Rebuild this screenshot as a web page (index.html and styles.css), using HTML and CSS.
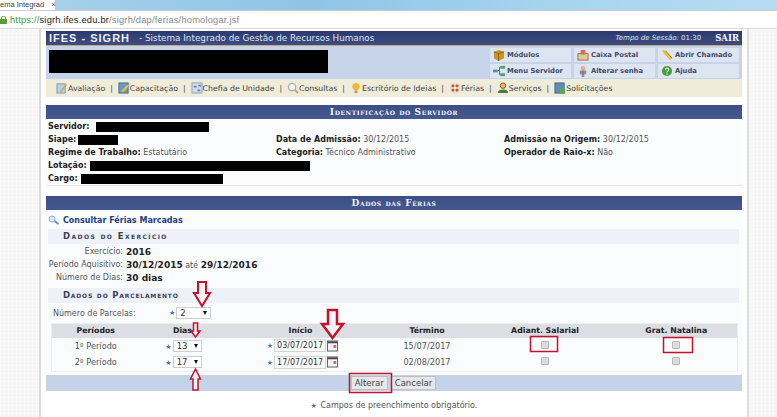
FILE: index.html
```html
<!DOCTYPE html>
<html lang="pt-BR">
<head>
    <meta charset="UTF-8">
    <title>SIGRH - Homologar Férias</title>
    <link rel="stylesheet" href="styles.css">
</head>
<body>
    <div class="tabstrip">
        <div class="tab"><span class="tab-title">ema Integrad</span><span class="tab-close">×</span></div>
    </div>
    <div class="urlbar">
        <svg class="lock" width="7" height="8" viewBox="0 0 7 8"><rect x="0" y="3" width="7" height="5" fill="#5a9a3a"/><path d="M1.5 3V2a2 2 0 0 1 4 0v1" fill="none" stroke="#5a9a3a"/></svg>
        <span class="url-https">https://</span><span class="url-host">sigrh.ifes.edu.br</span><span class="url-path">/sigrh/dap/ferias/homologar.jsf</span>
    </div>

    <div class="page">
        <div class="side side-left"></div>
        <div class="main">
            <div class="topbar">
                <span class="brand">IFES - SIGRH</span>
                <span class="brand-sub">- Sistema Integrado de Gestão de Recursos Humanos</span>
                <span class="session"><i>Tempo de Sessão:</i> 01:30</span>
                <span class="logout">SAIR</span>
            </div>

            <div class="userband">
                <div class="redact redact-user"></div>
                <div class="shortcuts">
                    <div class="shortcut">
                        <svg width="12" height="12" viewBox="0 0 13 13"><path d="M1 3l6-2 5 2v7l-6 3-5-3z" fill="#c9952a"/><path d="M1 3l5 2 6-2M6 5v8" fill="none" stroke="#8a6414"/></svg>Módulos
                    </div>
                    <div class="shortcut">
                        <svg width="12" height="12" viewBox="0 0 13 13"><rect x="1" y="5" width="11" height="7" fill="#e0c9a0" stroke="#a0703a"/><rect x="4" y="1" width="5" height="5" fill="#d86a5a"/></svg>Caixa Postal
                    </div>
                    <div class="shortcut">
                        <svg width="12" height="12" viewBox="0 0 13 13"><path d="M1 1l4 1 7 8-2 2-7-7z" fill="#e8c028"/><path d="M5 2l7 8" stroke="#a08010" fill="none"/></svg>Abrir Chamado
                    </div>
                    <div class="shortcut">
                        <svg width="12" height="12" viewBox="0 0 13 13"><rect x="0" y="5" width="5" height="3" fill="#4a90c0"/><rect x="8" y="1" width="5" height="3" fill="#4aa060"/><rect x="8" y="9" width="5" height="3" fill="#4aa060"/><path d="M5 6h2V2.5h1M7 6v4.500h1" fill="none" stroke="#557"/></svg>Menu Servidor
                    </div>
                    <div class="shortcut">
                        <svg width="12" height="12" viewBox="0 0 13 13"><circle cx="6.5" cy="3.5" r="2.5" fill="#e0b080"/><path d="M3 6h7v4H8v3H5v-3H3z" fill="#8a90a8"/><path d="M6.5 6v4" stroke="#c04040"/></svg>Alterar senha
                    </div>
                    <div class="shortcut">
                        <svg width="12" height="12" viewBox="0 0 13 13"><circle cx="6.5" cy="6.5" r="5.5" fill="#4a9a3a"/><path d="M4.8 5a1.8 1.8 0 1 1 2.500 1.700c-.6.3-.8.6-.8 1.300M6.500 9.200v1" fill="none" stroke="#fff" stroke-width="1.2"/></svg>Ajuda
                    </div>
                </div>
            </div>

            <div class="menubar">
                <span class="menu-item"><svg width="12" height="12" viewBox="0 0 13 13"><rect x="1" y="2" width="9" height="10" fill="#b8d0e8" stroke="#7a98b8"/><path d="M4 10l7-8 1 1-6 8z" fill="#d8a840"/></svg>Avaliação</span><span class="sep">|</span>
                <span class="menu-item"><svg width="12" height="12" viewBox="0 0 13 13"><rect x="1" y="1" width="10" height="11" fill="#6a98c0" stroke="#4a6a90"/><path d="M3 10l7-7 2 1-6 7z" fill="#e0c040"/></svg>Capacitação</span><span class="sep">|</span>
                <span class="menu-item"><svg width="12" height="12" viewBox="0 0 13 13"><rect x="1" y="1" width="11" height="11" fill="#d0dcec" stroke="#8aa0c0"/><path d="M3 4h3v2H3zM8 3h3v2H8zM7 8h3v2H7z" fill="#5a88b8"/></svg>Chefia de Unidade</span><span class="sep">|</span>
                <span class="menu-item"><svg width="12" height="12" viewBox="0 0 13 13"><circle cx="5.5" cy="5.5" r="4" fill="#f4f4f0" stroke="#b0b0b8" stroke-width="1.5"/><path d="M8.5 8.5l3.500 3.500" stroke="#d8a040" stroke-width="2"/></svg>Consultas</span><span class="sep">|</span>
                <span class="menu-item"><svg width="12" height="12" viewBox="0 0 13 13"><circle cx="6.5" cy="5" r="4" fill="#f0b838"/><rect x="5" y="9" width="3" height="3" fill="#a89878"/></svg>Escritório de Ideias</span><span class="sep">|</span>
                <span class="menu-item"><svg width="12" height="12" viewBox="0 0 13 13"><circle cx="6.5" cy="6.5" r="4.5" fill="none" stroke="#e8e0d0" stroke-width="3"/><path d="M3.3 3.3l2 2M9.7 3.3l-2 2M3.3 9.7l2-2M9.7 9.700l-2-2" stroke="#d05030" stroke-width="3"/></svg>Férias</span><span class="sep">|</span>
                <span class="menu-item"><svg width="12" height="12" viewBox="0 0 13 13"><circle cx="6.5" cy="4" r="3" fill="#e8b060" stroke="#8a6020"/><path d="M1 12c0-3 2-4 5.500-4s5.500 1 5.500 4z" fill="#4a7a40"/></svg>Serviços</span><span class="sep">|</span>
                <span class="menu-item"><svg width="12" height="12" viewBox="0 0 13 13"><rect x="1" y="1" width="10" height="11" fill="#5a90b8" stroke="#3a6a90"/><rect x="6" y="7" width="6" height="6" fill="#60a860"/></svg>Solicitações</span>
            </div>

            <div class="section">
                <h3 class="section-title">Identificação do Servidor</h3>
                <div class="ident">
                    <div class="ident-row"><b>Servidor:</b><span class="redact redact-name"></span></div>
                    <div class="ident-row">
                        <span class="col-a"><b>Siape:</b><span class="redact redact-siape"></span></span>
                        <span class="col-b"><b>Data de Admissão:</b> 30/12/2015</span>
                        <span><b>Admissão na Origem:</b> 30/12/2015</span>
                    </div>
                    <div class="ident-row">
                        <span class="col-a"><b>Regime de Trabalho:</b> Estatutário</span>
                        <span class="col-b"><b>Categoria:</b> Técnico Administrativo</span>
                        <span><b>Operador de Raio-x:</b> Não</span>
                    </div>
                    <div class="ident-row"><b>Lotação:</b><span class="redact redact-lotacao"></span></div>
                    <div class="ident-row"><b>Cargo:</b><span class="redact redact-cargo"></span></div>
                </div>
            </div>

            <div class="section section-ferias">
                <h3 class="section-title">Dados das Férias</h3>
                <div class="ferias">
                    <a class="consult" href="#"><svg width="13" height="11" viewBox="0 0 13 11"><circle cx="4" cy="4" r="3" fill="#dce8f4" stroke="#90b0d0"/><path d="M6.5 6l4 3" stroke="#7090b0" stroke-width="2"/></svg>Consultar Férias Marcadas</a>

                    <h4 class="subhead subhead-exerc">Dados do Exercício</h4>
                    <div class="info-row"><span class="info-label">Exercício:</span><b>2016</b></div>
                    <div class="info-row"><span class="info-label">Período Aquisitivo:</span><span><b>30/12/2015</b> até <b>29/12/2016</b></span></div>
                    <div class="info-row"><span class="info-label">Número de Dias:</span><b>30 dias</b></div>

                    <h4 class="subhead subhead-parc">Dados do Parcelamento</h4>
                    <div class="parcelas">
                        <span class="parcelas-label">Número de Parcelas:</span>
                        <span class="req">★</span>
                        <span class="select select-parc">2<i class="caret"></i></span>
                    </div>

                    <table class="periods">
                        <thead>
                            <tr><th>Períodos</th><th>Dias</th><th>Início</th><th>Término</th><th>Adiant. Salarial</th><th>Grat. Natalina</th></tr>
                        </thead>
                        <tbody>
                            <tr>
                                <td>1º Período</td>
                                <td><span class="req">★</span><span class="select">13<i class="caret"></i></span></td>
                                <td><span class="req">★</span><span class="date">03/07/2017</span><svg class="cal" width="11" height="12" viewBox="0 0 12 12"><rect x=".5" y=".5" width="11" height="11" fill="#f4f0f0" stroke="#556"/><rect x="1" y="1" width="10" height="2" fill="#445"/><rect x="7" y="5" width="3" height="3" fill="#d06060"/></svg></td>
                                <td>15/07/2017</td>
                                <td><span class="check"></span></td>
                                <td><span class="check"></span></td>
                            </tr>
                            <tr>
                                <td>2º Período</td>
                                <td><span class="req">★</span><span class="select">17<i class="caret"></i></span></td>
                                <td><span class="req">★</span><span class="date">17/07/2017</span><svg class="cal" width="11" height="12" viewBox="0 0 12 12"><rect x=".5" y=".5" width="11" height="11" fill="#f4f0f0" stroke="#556"/><rect x="1" y="1" width="10" height="2" fill="#445"/><rect x="7" y="5" width="3" height="3" fill="#d06060"/></svg></td>
                                <td>02/08/2017</td>
                                <td><span class="check"></span></td>
                                <td><span class="check"></span></td>
                            </tr>
                        </tbody>
                    </table>
                </div>
                <div class="actions">
                    <button class="btn">Alterar</button>
                    <button class="btn">Cancelar</button>
                </div>
            </div>

            <p class="required-note"><span class="req">★</span> Campos de preenchimento obrigatório.</p>
        </div>
        <div class="side side-right"></div>
    </div>

    <!-- marcacoes em vermelho por cima da tela -->
    <svg class="marks" width="777" height="417" viewBox="0 0 777 417">
        <g fill="#fbf4f4" stroke="#c4122e" stroke-width="2">
            <path d="M198 282h8v11h4l-8 13-8-13h4z"/>
            <path d="M193.500 323h4v8h2.500l-4.500 6-4.500-6h2.500z" stroke-width="1.500"/>
            <path d="M328 310h9v14h6l-10.500 14-10.500-14h6z" stroke-width="2.500"/>
            <path d="M195.500 369l5 10h-2.500v11h-5v-11h-2.500z" stroke-width="1.500"/>
        </g>
        <g fill="none" stroke="#c4122e" stroke-width="1.500">
            <rect x="349.500" y="373.500" width="42" height="19"/>
            <rect x="530.500" y="336.500" width="27" height="15"/>
            <rect x="663.500" y="337.500" width="29" height="15"/>
        </g>
    </svg>
</body>
</html>
```

FILE: styles.css
```css
html, body {
    margin: 0;
    height: 417px;
    overflow: hidden;
}
body {
    position: relative;
    font-family: "DejaVu Sans", Verdana, sans-serif;
    font-size: 8px;
    color: #555;
    background-color: #fff;
}
b {
    color: #222;
}

/* barra do navegador */
.tabstrip {
    height: 10px;
    background: linear-gradient(90deg, #a9d3ec, #8fc4e6 40%, #a5d4ef 70%, #b6dcf2);
}
.tab {
    display: flex;
    width: 55px;
    height: 10px;
    background-color: #fff;
    font-family: "Liberation Sans", sans-serif;
    font-size: 7.5px;
    line-height: 10px;
    white-space: nowrap;
    color: #444;
}
.tab-close {
    margin-left: 7px;
}
.urlbar {
    display: flex;
    align-items: center;
    height: 17px;
    border-top: 1px solid #c8ccd0;
    border-bottom: 1px solid #d8d8d8;
    font-family: "Liberation Sans", sans-serif;
    font-size: 9.3px;
    letter-spacing: .2px;
}
.lock {
    margin-right: 3px;
}
.url-https {
    color: #3a9a4a;
}
.url-host {
    color: #222;
}
.url-path {
    color: #888;
}

/* pagina */
.page {
    display: flex;
    height: 388px;
}
.side {
    flex: none;
    background-color: #f5f5f5;
    background-image: linear-gradient(#fafafa 1px, transparent 1px), linear-gradient(90deg, #fafafa 1px, transparent 1px);
    background-size: 4px 4px;
}
.side-left {
    width: 39px;
    border-right: 2px solid #dcdcdc;
}
.side-right {
    flex: 1;
    border-left: 2px solid #dcdcdc;
}
.main {
    flex: none;
    width: 696px;
    padding: 2px 5px 0 5px;
    background-color: #fff;
}

.topbar {
    display: flex;
    align-items: center;
    height: 14px;
    padding: 0 3px;
    background: linear-gradient(#2b3a6e, #3d4d80);
    color: #dfe4f2;
    border-bottom: 1px solid #c8a878;
}
.brand {
    font-family: "Liberation Sans", sans-serif;
    font-size: 11px;
    font-weight: bold;
    letter-spacing: 1px;
    color: #e8ecf6;
}
.brand-sub {
    margin-left: 9px;
    font-size: 8.8px;
}
.session {
    margin-left: auto;
    font-size: 7px;
}
.logout {
    margin-left: 14px;
    font-family: "DejaVu Serif", serif;
    font-size: 8.5px;
    font-weight: bold;
    color: #f4f4f8;
}

.userband {
    display: flex;
    justify-content: space-between;
    height: 33px;
    padding: 0 3px;
    background-color: #c6d3e8;
}
.redact {
    display: inline-block;
    background-color: #000;
}
.redact-user {
    width: 279px;
    height: 23px;
    margin-top: 4px;
}
.shortcuts {
    display: grid;
    grid-template-columns: 81px 81px 81px;
    grid-auto-rows: 14px;
    gap: 2px 3px;
    padding-top: 2px;
}
.shortcut {
    display: flex;
    align-items: center;
    gap: 2px;
    padding-left: 3px;
    background-color: #dde5f2;
    font-size: 6.8px;
    font-weight: bold;
    white-space: nowrap;
    color: #3d4a6a;
}

.menubar {
    display: flex;
    align-items: center;
    height: 18px;
    padding-left: 10px;
    background-color: #f0ecda;
    font-size: 7.8px;
    color: #444;
}
.menu-item {
    display: flex;
    align-items: center;
}
.sep {
    margin: 0 5px;
}

.section {
    margin-top: 8px;
}
.section-ferias {
    margin-top: 10px;
}
.section-title {
    margin: 0;
    height: 14px;
    background: linear-gradient(#3c4f85, #46598f);
    font-family: "DejaVu Serif", serif;
    font-size: 9px;
    font-weight: bold;
    font-variant: small-caps;
    letter-spacing: .6px;
    line-height: 14px;
    text-align: center;
    color: #f2f4fa;
}
.ident {
    height: 65px;
    padding: 1px 2px 0;
    background-color: #fbfcfe;
    border-bottom: 1px solid #e6e8ec;
}
.ident-row {
    display: flex;
    align-items: center;
    height: 13px;
    white-space: pre;
}
.ident-row .redact {
    height: 10px;
}
.ident-row .redact-name {
    width: 113px;
    margin-left: 7px;
}
.ident-row .redact-siape {
    width: 40px;
    margin-left: 2px;
}
.ident-row .redact-lotacao {
    width: 220px;
    margin-left: 3px;
}
.ident-row .redact-cargo {
    width: 142px;
    margin-left: 3px;
}
.col-a {
    display: flex;
    align-items: center;
    width: 228px;
}
.col-b {
    width: 228px;
}

.ferias {
    padding: 0 3px 3px 2px;
    background-color: #fbfcfe;
}
.consult {
    display: flex;
    align-items: center;
    gap: 2px;
    height: 18px;
    padding-top: 1px;
    color: #24407a;
    font-weight: bold;
    text-decoration: none;
}
.subhead {
    margin: 0 0 1px;
    height: 15px;
    padding-left: 15px;
    background-color: #eef1f7;
    font-size: 8.5px;
    font-weight: bold;
    font-variant: small-caps;
    letter-spacing: .8px;
    line-height: 15px;
    color: #3a4258;
}
.subhead-exerc {
    letter-spacing: 1.4px;
}
.subhead-parc {
    margin-top: 4px;
    margin-bottom: 2px;
}
.info-row {
    display: grid;
    grid-template-columns: 75px auto;
    justify-content: start;
    align-items: center;
    height: 13px;
    gap: 3px;
}
.info-row b {
    font-size: 9px;
}
.info-label {
    text-align: right;
}
.parcelas {
    display: flex;
    align-items: center;
    height: 16px;
    padding-left: 5px;
}
.parcelas-label {
    width: 116px;
}
.req {
    color: #4a70b8;
    font-size: 7px;
    margin-right: 1px;
}
.select {
    display: inline-flex;
    align-items: center;
    justify-content: space-between;
    box-sizing: border-box;
    width: 29px;
    height: 12px;
    padding: 0 3px;
    background-color: #fff;
    border: 1px solid #cfcfcf;
    font-size: 8.5px;
    color: #333;
}
.select-parc {
    width: 35px;
}
.caret {
    width: 0;
    height: 0;
    border-left: 2.5px solid transparent;
    border-right: 2.5px solid transparent;
    border-top: 4px solid #111;
}
.periods {
    width: 687px;
    margin: 2px 0 0 3px;
    border-collapse: collapse;
    table-layout: fixed;
    border: 1px solid #eceef2;
}
.periods th {
    box-sizing: border-box;
    height: 14px;
    padding: 0;
    background-color: #dcdee4;
    color: #222;
    font-size: 7.8px;
}
.periods td {
    height: 16.5px;
    padding: 0;
    text-align: center;
    vertical-align: middle;
    font-size: 8.2px;
}
.periods th:nth-child(1) { width: 88px; }
.periods th:nth-child(2) { width: 94px; padding-right: 8px; }
.periods th:nth-child(3) { width: 134px; }
.periods th:nth-child(4) { width: 119px; }
.periods th:nth-child(5) { width: 117px; }
.periods th:nth-child(6),
.periods td:nth-child(6) {
    padding-left: 12px;
}
.periods td:nth-child(2) {
    padding-right: 6px;
}
.periods td:nth-child(3) {
    padding-left: 4px;
}
.date {
    display: inline-block;
    width: 50px;
    height: 11px;
    line-height: 11px;
    background-color: #fff;
    border: 1px solid #d4d4d4;
    font-size: 8px;
    color: #333;
}
.cal {
    margin-left: 1px;
    vertical-align: middle;
}
.check {
    display: inline-block;
    box-sizing: border-box;
    width: 8px;
    height: 8px;
    background-color: #dcdcdc;
    border: 1px solid #b8b8b8;
    border-radius: 1px;
}
.actions {
    display: flex;
    justify-content: center;
    align-items: center;
    gap: 3px;
    height: 16px;
    padding-right: 1px;
    background-color: #c5d3e9;
}
.btn {
    height: 14px;
    padding: 0 3px;
    background-color: #e8e8ea;
    border: 1px solid #bdbdc2;
    font-family: "DejaVu Sans", Verdana, sans-serif;
    font-size: 8.5px;
    color: #444;
}
.required-note {
    margin: 10px 0 0;
    text-align: center;
}
.required-note .req {
    font-size: 7px;
}

/* setas e caixas vermelhas */
.marks {
    position: absolute;
    top: 0;
    left: 0;
    pointer-events: none;
}
```
